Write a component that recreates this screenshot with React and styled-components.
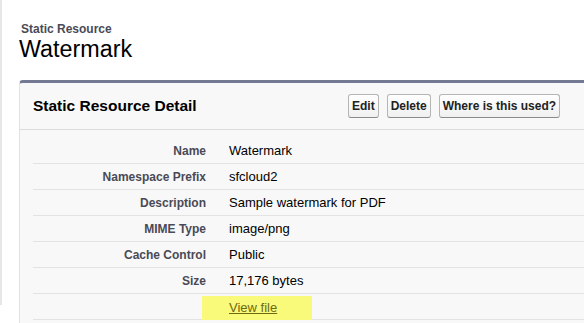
import React from 'react';
import styled, { createGlobalStyle } from 'styled-components';

const GlobalStyle = createGlobalStyle`
  html, body {
    margin: 0;
    padding: 0;
    background: #fff;
    overflow: hidden;
  }
  body {
    font-family: 'Liberation Sans', Arial, sans-serif;
  }
`;

const Page = styled.div`
  width: 584px;
  height: 323px;
  overflow: hidden;
`;

const Frame = styled.div`
  border-left: 2px solid #e6e6e6;
  height: 305px;
  padding-left: 17px;
  box-sizing: border-box;
`;

const PageHeader = styled.div`
  padding-top: 22px;
  margin-bottom: 18px;
`;

const Kicker = styled.div`
  font-size: 12px;
  line-height: 14px;
  font-weight: bold;
  color: #4a4a56;
  padding-left: 2px;
`;

const Title = styled.h1`
  margin: 0;
  font-size: 23.3px;
  line-height: 26px;
  font-weight: normal;
  color: #000;
`;

const Panel = styled.div`
  width: 640px;
  background: #f8f8f8;
  border-top: 3px solid #747a93;
  border-left: 1px solid #e2e2e2;
  border-top-left-radius: 4px;
  padding-bottom: 20px;
`;

const PanelHeader = styled.div`
  display: grid;
  grid-template-columns: 315px auto;
  align-items: center;
  height: 46px;
  padding-left: 13px;
  border-bottom: 1px solid #dcdcdc;
`;

const PanelTitle = styled.h2`
  margin: 0;
  font-size: 15.5px;
  font-weight: bold;
  color: #000;
`;

const Buttons = styled.div`
  display: flex;
  gap: 8px;
`;

const Button = styled.button`
  font-family: 'Liberation Sans', Arial, sans-serif;
  font-size: 12px;
  font-weight: bold;
  color: #222;
  height: 24px;
  padding: 0 3px;
  border: 1px solid #b5b5b5;
  border-bottom-color: #8a8a8a;
  border-radius: 3px;
  background: linear-gradient(#ffffff, #f0f0f0);
  cursor: pointer;
`;

const Detail = styled.div`
  padding-top: 8px;
  margin-left: 13px;
`;

const Row = styled.div`
  display: grid;
  grid-template-columns: 184px auto;
  box-sizing: border-box;
  height: 26px;
  align-items: center;
  border-bottom: 1px solid #e3e3e3;
`;

const Label = styled.div`
  text-align: right;
  padding-right: 11px;
  font-size: 12px;
  font-weight: bold;
  color: #4a4a56;
`;

const Value = styled.div`
  padding-left: 12px;
  font-size: 13px;
  color: #000;
`;

const Highlight = styled.span`
  display: inline-block;
  margin-left: -27px;
  margin-top: 2px;
  padding: 0 35px 0 27px;
  height: 24px;
  line-height: 24px;
  background: #f9f97a;
`;

const FileLink = styled.a`
  color: #6f6a12;
  text-decoration: underline;
  font-size: 13px;
`;

const fields = [
  ['Name', 'Watermark'],
  ['Namespace Prefix', 'sfcloud2'],
  ['Description', 'Sample watermark for PDF'],
  ['MIME Type', 'image/png'],
  ['Cache Control', 'Public'],
  ['Size', '17,176 bytes'],
];

export default function App() {
  return (
    <Page>
      <GlobalStyle />
      <Frame>
        <PageHeader>
          <Kicker>Static Resource</Kicker>
          <Title>Watermark</Title>
        </PageHeader>
        <Panel>
          <PanelHeader>
            <PanelTitle>Static Resource Detail</PanelTitle>
            <Buttons>
              <Button>Edit</Button>
              <Button>Delete</Button>
              <Button>Where is this used?</Button>
            </Buttons>
          </PanelHeader>
          <Detail>
            {fields.map(([label, value]) => (
              <Row key={label}>
                <Label>{label}</Label>
                <Value>{value}</Value>
              </Row>
            ))}
            <Row>
              <Label />
              <Value>
                <Highlight>
                  <FileLink href="#">View file</FileLink>
                </Highlight>
              </Value>
            </Row>
          </Detail>
        </Panel>
      </Frame>
    </Page>
  );
}
